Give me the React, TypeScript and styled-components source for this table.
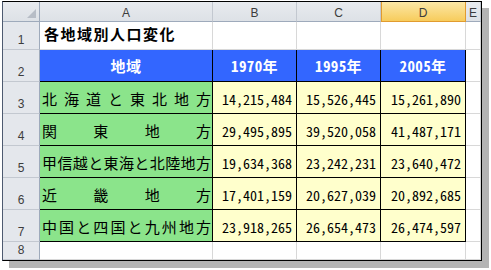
import { FC } from 'react'
import styled, { createGlobalStyle, css } from 'styled-components'

const GlobalStyle = createGlobalStyle`
  html, body {
    margin: 0;
    padding: 0;
    background: #fff;
  }
  body {
    width: 491px;
    height: 270px;
    overflow: hidden;
  }
`

const JP = `"Noto Sans CJK JP", "Noto Sans", sans-serif`
const UI = `"Liberation Sans", Arial, sans-serif`

const Frame = styled.div`
  margin: 1px 0 0 2px;
  width: 480px;
  height: 260px;
  box-sizing: border-box;
  border: 1px solid #000;
  border-left-color: #4d5a70;
  box-shadow: 7px 7px 0 #b4b4b4;
  background: #fff;
  overflow: hidden;
`

const Sheet = styled.div`
  display: grid;
  grid-template-columns: 37px 173px 84px 84px 85px 1fr;
  grid-template-rows: 20px 28px repeat(6, 32px) 1fr;
  height: 100%;
`

const base = css`
  box-sizing: border-box;
  min-width: 0;
  overflow: hidden;
  white-space: nowrap;
`

const Corner = styled.div`
  ${base};
  display: flex;
  align-items: flex-end;
  justify-content: flex-end;
  padding: 0 3px 3px 0;
  background: linear-gradient(#e8ebef, #dde1e6);
  border-right: 1px solid #9eaabb;
  border-bottom: 1px solid #9eaabb;
`

const SelectAll = styled.span`
  width: 9px;
  height: 9px;
  background: #b7bdc6;
  clip-path: polygon(100% 0, 100% 100%, 0 100%);
`

const ColHead = styled.div<{ $active?: boolean }>`
  ${base};
  display: flex;
  align-items: center;
  justify-content: center;
  padding-top: 2px;
  font: 12px ${UI};
  color: #3c3c3c;
  background: ${(p) => (p.$active ? 'linear-gradient(#fbe7a6, #f7cc5c)' : 'linear-gradient(#e8ebef, #dde1e6)')};
  border-right: 1px solid ${(p) => (p.$active ? '#e19b2f' : '#c3c8d0')};
  border-bottom: 1px solid ${(p) => (p.$active ? '#e19b2f' : '#9eaabb')};
  box-shadow: ${(p) => (p.$active ? 'inset 1px 0 0 #e19b2f' : 'none')};
`

const RowHead = styled.div`
  ${base};
  display: flex;
  align-items: flex-end;
  justify-content: center;
  padding-bottom: 2px;
  font: 12px ${UI};
  color: #3c3c3c;
  background: #e4e7ec;
  border-right: 1px solid #9eaabb;
  border-bottom: 1px solid #c3c8d0;
`

const Blank = styled.div`
  ${base};
  background: #fff;
  border-right: 1px solid #d8d8d8;
  border-bottom: 1px solid #d8d8d8;
`

const Title = styled(Blank)`
  display: flex;
  align-items: flex-end;
  padding: 0 0 5px 4px;
  font: bold 15px ${JP};
  letter-spacing: 1.5px;
  color: #000;
  overflow: visible;
`

const boxed = css`
  border-right: 1px solid #000;
  border-bottom: 1px solid #000;
`

const HeadCell = styled.div`
  ${base};
  ${boxed};
  display: flex;
  align-items: center;
  justify-content: center;
  background: #3366ff;
  color: #fff;
  font: bold 15px ${JP};
  font-feature-settings: 'hwid';
  letter-spacing: 0.4px;
`

const RegionCell = styled.div`
  ${base};
  ${boxed};
  display: flex;
  align-items: center;
  justify-content: space-between;
  padding: 2px 1px 0 2px;
  background: #8be48b;
  color: #000;
  font: 15px ${JP};
`

const NumCell = styled.div`
  ${base};
  ${boxed};
  display: flex;
  align-items: center;
  justify-content: flex-end;
  padding: 2px 4px 0 0;
  background: #ffffcc;
  color: #000;
  font: 14px ${JP};
  font-feature-settings: 'hwid';
`

const columns = ['A', 'B', 'C', 'D', 'E']
const years = ['1970年', '1995年', '2005年']

const rows: { region: string; values: string[] }[] = [
  { region: '北海道と東北地方', values: ['14,215,484', '15,526,445', '15,261,890'] },
  { region: '関東地方', values: ['29,495,895', '39,520,058', '41,487,171'] },
  { region: '甲信越と東海と北陸地方', values: ['19,634,368', '23,242,231', '23,640,472'] },
  { region: '近畿地方', values: ['17,401,159', '20,627,039', '20,892,685'] },
  { region: '中国と四国と九州地方', values: ['23,918,265', '26,654,473', '26,474,597'] },
]

const App: FC = () => (
  <>
    <GlobalStyle />
    <Frame>
      <Sheet>
        <Corner>
          <SelectAll />
        </Corner>
        {columns.map((c) => (
          <ColHead key={c} $active={c === 'D'}>
            {c}
          </ColHead>
        ))}

        <RowHead>1</RowHead>
        <Title>各地域別人口変化</Title>
        <Blank />
        <Blank />
        <Blank />
        <Blank />

        <RowHead>2</RowHead>
        <HeadCell>地域</HeadCell>
        {years.map((y) => (
          <HeadCell key={y}>{y}</HeadCell>
        ))}
        <Blank />

        {rows.map((r, i) => (
          <Row key={r.region} n={i + 3} region={r.region} values={r.values} />
        ))}

        <RowHead>8</RowHead>
        <Blank />
        <Blank />
        <Blank />
        <Blank />
        <Blank />
      </Sheet>
    </Frame>
  </>
)

const Row: FC<{ n: number; region: string; values: string[] }> = ({ n, region, values }) => (
  <>
    <RowHead>{n}</RowHead>
    <RegionCell>
      {region.split('').map((ch, i) => (
        <span key={i}>{ch}</span>
      ))}
    </RegionCell>
    {values.map((v, i) => (
      <NumCell key={i}>{v}</NumCell>
    ))}
    <Blank />
  </>
)

export default App
